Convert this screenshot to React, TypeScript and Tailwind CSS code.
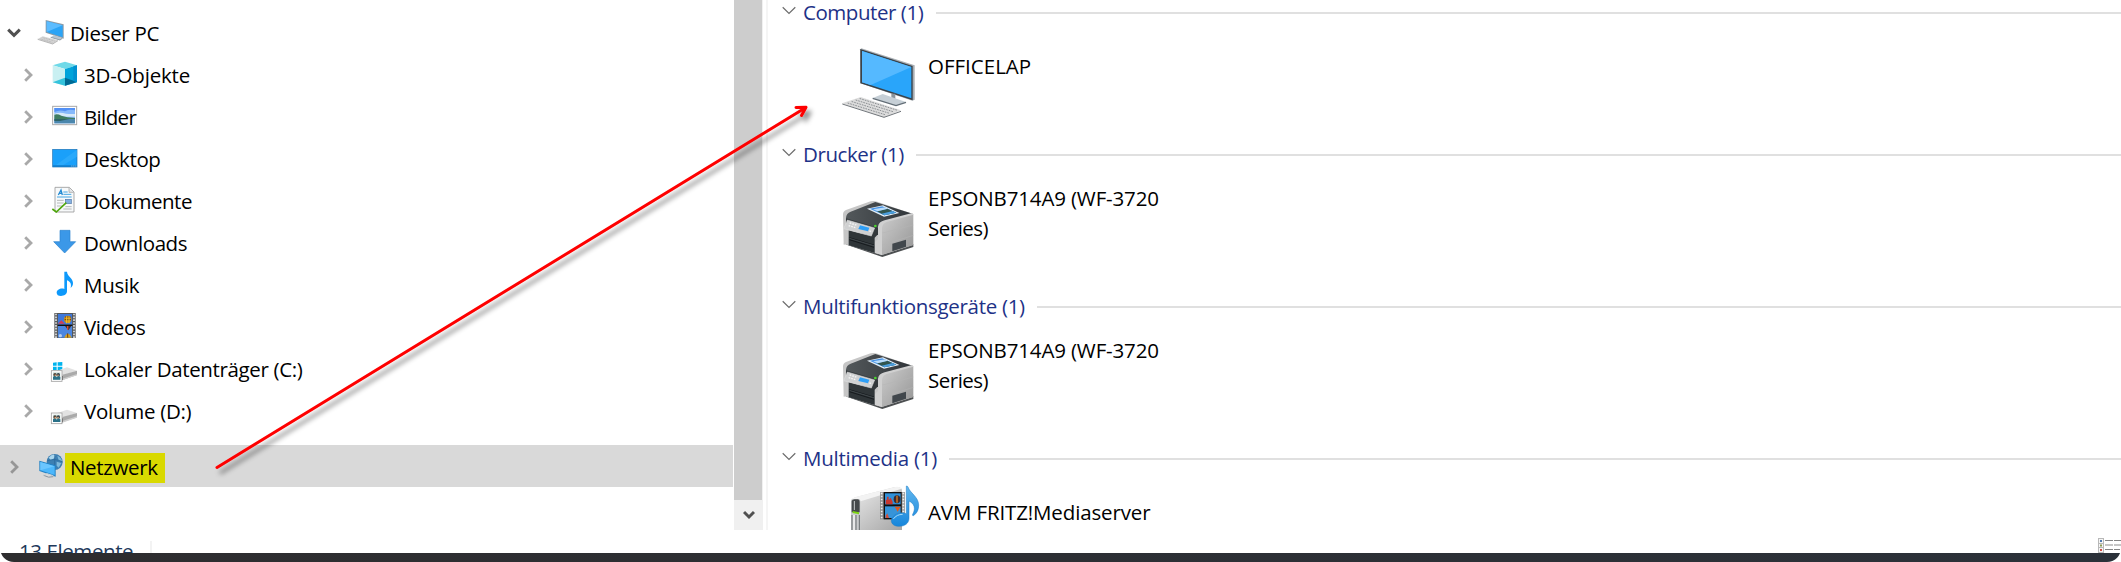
import type { ReactNode } from 'react'
import clsx from 'clsx'

interface IconProps {
  viewBox: string
  children: ReactNode
}

// small 26px tree icon
function TreeIcon({ viewBox, children }: IconProps) {
  return (
    <svg viewBox={viewBox} className="h-[26px] w-[26px] shrink-0 overflow-visible">
      {children}
    </svg>
  )
}

function PcIcon() {
  return (
    <TreeIcon viewBox="114 60 78 78">
      <path d="M137 60 L191 73 V116 L137 98 Z" fill="#8f9ba5" />
      <path d="M140 64 L188 76 V112 L140 96 Z" fill="#2ba4f6" />
      <path d="M140 64 L188 76 L140 96 Z" fill="#5cbcff" />
      <path d="M162 106 L188 114 L180 121 L152 112 Z" fill="#b9c6d1" />
      <path d="M152 112 L180 120 L187 115" fill="none" stroke="#70808c" strokeWidth="2" />
      <path d="M113 117 L128 109 L174 121 L158 132 Z" fill="#d4d4d4" />
      <path d="M113 118 L158 132 L174 122" fill="none" stroke="#999" strokeWidth="2" />
      <path d="M122 117 L157 127 M128 113 L164 123" stroke="#aaa" strokeWidth="2" strokeDasharray="3 2" />
    </TreeIcon>
  )
}

function CubeIcon() {
  return (
    <TreeIcon viewBox="156 186 78 78">
      <path d="M195 185 L231 196 L195 207 L158 196 Z" fill="#6fd9e8" />
      <path d="M158 196 L195 207 V257 L158 247 Z" fill="#c9f0f2" />
      <path d="M195 207 L231 196 V247 L195 257 Z" fill="#00a3da" />
      <path d="M158 247 L195 233 V257 Z" fill="#35c3dc" />
      <path d="M195 233 L231 246 L195 257 Z" fill="#006a94" />
      <path d="M220 199 L231 196 V247 L220 242 Z" fill="#0090d0" />
    </TreeIcon>
  )
}

function PicturesIcon() {
  return (
    <TreeIcon viewBox="156 312 78 78">
      <rect x="158" y="319" width="72" height="55" fill="#fff" stroke="#a8a8a8" strokeWidth="3" />
      <rect x="163" y="324" width="62" height="46" fill="#86b9fb" />
      <path d="M163 324 H225 V331 Q205 326 195 334 Q180 328 163 336 Z" fill="#5290f5" />
      <path d="M163 341 Q180 335 198 341 Q210 343 225 342 V350 H163 Z" fill="#d5e9fa" />
      <path d="M163 344 Q172 340 184 347 Q200 352 225 354 V358 H163 Z" fill="#3f7d62" />
      <rect x="163" y="357" width="62" height="13" fill="#4b87ad" />
      <path d="M163 357 H208 L180 363 H163 Z" fill="#2d6367" />
    </TreeIcon>
  )
}

function DesktopIcon() {
  return (
    <TreeIcon viewBox="156 18 78 78">
      <rect x="158" y="28" width="73" height="53" fill="#1aa0fa" stroke="#2072b4" strokeWidth="2" />
      <path d="M231 29 V50 L190 75 H168 Z" fill="#35affc" opacity=".6" />
      <path d="M159 78 H231" stroke="#0c6cb4" strokeWidth="3" />
      <path d="M214 78 H230" stroke="#cfeafe" strokeWidth="2" strokeDasharray="3 3" />
    </TreeIcon>
  )
}

function DocumentsIcon() {
  return (
    <TreeIcon viewBox="156 144 78 78">
      <path d="M165 142 H208 L222 156 V216 H165 Z" fill="#f7f9fa" stroke="#9a9a9a" strokeWidth="2.5" />
      <path d="M207 143 V157 H221" fill="#e4e7e9" stroke="#9a9a9a" strokeWidth="2" />
      <path d="M175 165 L183 150 L187 165 M178 160 H186" fill="none" stroke="#258bd3" strokeWidth="4" />
      <path d="M190 156 H203 M190 163 H214 M171 171 H215" stroke="#45a5e3" strokeWidth="3" />
      <path d="M171 181 H191 M171 189 H191 M171 198 H189 M190 207 H215 M196 200 H215" stroke="#b5b8ba" strokeWidth="3" />
      <rect x="196" y="178" width="18" height="13" fill="#83aee0" stroke="#527aac" strokeWidth="2" />
      <path d="M157 207 L169 216 L199 188" fill="none" stroke="#4ea60b" strokeWidth="5" />
    </TreeIcon>
  )
}

function DownloadsIcon() {
  return (
    <TreeIcon viewBox="156 270 78 78">
      <path d="M180 271 H210 V305 H227 L194 339 L161 305 H180 Z" fill="#3b98e8" stroke="#2c83cf" strokeWidth="2" />
    </TreeIcon>
  )
}

function MusicIcon() {
  return (
    <TreeIcon viewBox="156 -24 78 78">
      <path
        d="M193 -25 H201 C202 -10 220 -5 219 10 C219 17 216 21 212 24 C215 12 211 5 201 1 V34 C201 43 192 48 183 48 C175 48 170 44 170 38 C170 29 183 23 193 27 Z"
        fill="#0d99fb"
      />
    </TreeIcon>
  )
}

function VideosIcon() {
  return (
    <TreeIcon viewBox="156 102 78 78">
      <rect x="163" y="99" width="64" height="75" fill="#55585b" />
      <path d="M168 101 V174 M222 101 V174" stroke="#e0e0e0" strokeWidth="5" strokeDasharray="5 3.5" />
      <rect x="174" y="102" width="42" height="32" fill="#3e78da" />
      <rect x="174" y="138" width="42" height="35" fill="#4b86e0" />
      <path d="M173 136 H217" stroke="#111" strokeWidth="4" />
      <circle cx="203" cy="118" r="11" fill="#cf8d18" />
      <path d="M195 111 H212 M194 119 H213" stroke="#6a3d18" strokeWidth="3" />
      <path d="M200 109 V130 M207 109 V130" stroke="#f4c524" strokeWidth="3" />
      <path d="M174 131 L184 121 L194 131 Z" fill="#d43c50" />
      <path d="M195 138 H214 L205 151 Z" fill="#3d3033" />
      <path d="M203 138 V149" stroke="#df4c2b" strokeWidth="4" />
      <path d="M193 173 Q203 149 215 173 Z" fill="#d9a21b" />
      <path d="M203 160 V173" stroke="#6a3d18" strokeWidth="3" />
      <circle cx="181" cy="167" r="5" fill="#b9cfee" />
    </TreeIcon>
  )
}

function Drive({ dy = 0 }: { dy?: number }) {
  return (
    <g transform={`translate(0 ${dy})`}>
      <path d="M163 275 L201 262 L231 272 L187 286 Z" fill="#e2e2e2" />
      <path d="M187 284 L231 272 V285 L187 300 Z" fill="#aaaaaa" />
      <path d="M187 296 L231 282 V286 L187 301 Z" fill="#cfcfcf" />
      <path d="M187 288 V300" stroke="#444" strokeWidth="3" />
      <rect x="154" y="272" width="32" height="32" fill="#fff" stroke="#a2a2a2" strokeWidth="2.5" />
      <rect x="159" y="277" width="22" height="22" fill="#c9ddd8" />
      <path d="M159 299 V291 Q165 285 170 292 Q176 285 181 291 V299 Z" fill="#2a7188" />
      <circle cx="165" cy="284" r="5" fill="#4d4036" />
      <circle cx="175" cy="284" r="5" fill="#33404a" />
      <circle cx="166" cy="286" r="2.5" fill="#dba77c" />
      <circle cx="174" cy="286" r="2.5" fill="#dba77c" />
    </g>
  )
}

function SystemDriveIcon() {
  return (
    <TreeIcon viewBox="156 228 78 78">
      <path d="M159 248 L170 247 V257 H159 Z M173 247 L187 246 V257 H173 Z M159 260 H170 V270 H159 Z M173 260 H187 V271 H173 Z" fill="#00b4ee" />
      <Drive />
    </TreeIcon>
  )
}

function DriveIcon() {
  return (
    <TreeIcon viewBox="156 354 78 78">
      <Drive dy={127} />
    </TreeIcon>
  )
}

function NetworkIcon() {
  return (
    <TreeIcon viewBox="114 84 78 78">
      <circle cx="164" cy="111" r="24" fill="#3c7fb2" />
      <path d="M146 98 Q155 87 166 89 L163 100 L152 105 Z" fill="#a9d6ee" />
      <path d="M172 92 Q184 98 186 108 L176 106 Z M170 110 L184 114 L176 128 L170 122 Z" fill="#7db8db" />
      <path d="M164 87 V134 M141 108 Q164 98 188 111" stroke="#2b6797" strokeWidth="2" fill="none" />
      <path d="M118 107 L167 121 V155 L118 138 Z" fill="#2584c7" />
      <path d="M121 111 L164 124 V150 L121 136 Z" fill="#4cb7fb" />
      <path d="M121 111 L164 124 L121 136 Z" fill="#6bc6ff" />
      <path d="M131 151 Q146 160 160 155" fill="none" stroke="#8895a0" strokeWidth="3" />
      <path d="M132 150 L141 146 L160 152" fill="none" stroke="#ccd4da" strokeWidth="3" />
    </TreeIcon>
  )
}

const KEY_ROWS = [0, 1, 2, 3]

function ComputerIcon() {
  return (
    <svg viewBox="420 138 228 228" className="h-[76px] w-[76px] shrink-0">
      <path d="M484 145 L644 196 V299 L637 302 L481 250 V148 Z" fill="#a9afb4" />
      <path d="M481 147 L638 198 V301 L481 250 Z" fill="#3a4249" />
      <path d="M486 153 L634 201 V295 L486 247 Z" fill="#29a5fa" />
      <path d="M486 153 L634 201 L512 255 L486 247 Z" fill="#55b9ff" />
      <path d="M574 281 H586 V303 L574 299 Z" fill="#8b949c" />
      <path d="M518 294 L548 282 L618 306 L588 317 Z" fill="#c6cfd6" />
      <path d="M518 295 L588 317 L618 307" fill="none" stroke="#626d76" strokeWidth="4" />
      <path d="M426 310 L482 291 L603 331 L552 352 Z" fill="#dcdcdc" />
      <path d="M427 312 L552 352 L603 334" fill="none" stroke="#70757a" strokeWidth="3" />
      {KEY_ROWS.map((r) => (
        <path
          key={r}
          d="M443 309 L555 344"
          transform={`translate(${r * 12} ${r * -4.5})`}
          stroke="#8b8f93"
          strokeWidth="3"
          strokeDasharray="5 3"
        />
      ))}
    </svg>
  )
}

function PrinterIcon() {
  return (
    <svg viewBox="420 102 228 180" className="h-[60px] w-[76px] shrink-0">
      <defs>
        <linearGradient id="printer-side" x1="0" x2="1" y1="0" y2="1">
          <stop offset="0" stopColor="#cdcdcd" />
          <stop offset="1" stopColor="#959595" />
        </linearGradient>
        <linearGradient id="printer-top" x1="0" x2="1" y1="0" y2="0">
          <stop offset="0" stopColor="#53585b" />
          <stop offset="1" stopColor="#303539" />
        </linearGradient>
      </defs>
      {/* body */}
      <path d="M431 236 L547 276 L640 246 V238 H431 Z" fill="#4d5052" />
      <path d="M429 148 Q429 139 438 135 L512 109 Q522 106 532 110 L639 147 V240 L545 270 L431 236 Z" fill="#c6c6c6" />
      <path d="M438 158 Q439 144 452 140 L526 111 L638 146 L555 169 Q540 172 537 184 L532 190 L438 162 Z" fill="url(#printer-top)" />
      <path d="M545 270 V185 Q546 173 558 169 L640 147 V240 Z" fill="url(#printer-side)" />
      <path d="M524 232 L534 222 V185 Q536 170 554 166 L636 144 L640 149 L560 171 Q547 175 546 190 V270 L524 263 Z" fill="#d0d0d0" />
      <path d="M547 204 L640 180 M547 240 L640 211" stroke="#b4b4b4" strokeWidth="1.5" />
      {/* photo on the glass */}
      <path d="M501 131 L549 121 L598 144 L552 155 Z" fill="#e4eef6" />
      <path d="M509 131 L547 124 L589 143 L553 151 Z" fill="#4792e4" />
      <path d="M531 139 L562 131 L589 143 L553 151 Z" fill="#31564f" />
      <path d="M519 133 L556 127 L564 131 L533 139 Z" fill="#b9dcfa" />
      <path d="M545 146 L578 138 L589 143 L553 151 Z" fill="#4b9fe0" />
      {/* paper trays */}
      <path d="M446 196 L524 216 V264 L446 241 Z" fill="#2f3538" />
      <path d="M448 218 L522 240 M448 224 L522 247" stroke="#111518" strokeWidth="2.5" />
      <path d="M449 220 L522 242" stroke="#596064" strokeWidth="1.5" />
      {/* control panel */}
      <path d="M438 160 L534 188 V208 L524 218 L438 190 Z" fill="#34393c" />
      <path d="M442 165 L524 189 L514 213 L431 191 Z" fill="#cfd0d1" stroke="#e3e3e3" strokeWidth="1.5" />
      <path d="M480 181 L508 188 L504 199 L475 192 Z" fill="#2f9ff6" />
      <path d="M449 174 L469 180 M446 182 L466 188 M508 198 L516 200" stroke="#f4f4f4" strokeWidth="4" strokeDasharray="5 3" />
      <circle cx="526" cy="183" r="4" fill="#4ad52d" />
      {/* side vent */}
      <path d="M577 236 L618 224 V245 L577 259 Z" fill="#41474c" />
    </svg>
  )
}

function MediaServerIcon() {
  return (
    <svg viewBox="420 180 240 135" className="h-[45px] w-[80px] shrink-0">
      <defs>
        <linearGradient id="server-body" x1="0" x2="1" y1="0" y2="1">
          <stop offset="0" stopColor="#ededed" />
          <stop offset="1" stopColor="#a6a6a6" />
        </linearGradient>
        <linearGradient id="note-blue" x1="0" x2="0" y1="0" y2="1">
          <stop offset="0" stopColor="#63b7ee" />
          <stop offset="1" stopColor="#1686dc" />
        </linearGradient>
      </defs>
      <path d="M453 228 Q455 220 465 217 L585 186 Q606 184 606 197 V315 H453 Z" fill="url(#server-body)" />
      <path d="M455 224 Q457 220 465 217 L585 186 Q600 184 605 191 L482 229 Z" fill="#f3f3f3" />
      <rect x="453" y="222" width="28" height="93" rx="5" fill="#c9cbcc" />
      <path d="M455 262 V228 Q457 223 464 223 H474 Q479 224 479 230 V262 Z" fill="#45494b" />
      <path d="M463 228 V255" stroke="#c8cccd" strokeWidth="3" />
      <path d="M458 258 L477 262 V268 L458 264 Z" fill="#7bd50e" />
      <path d="M456 270 V315 M468 270 V315 M478 270 V315" stroke="#54595c" strokeWidth="2.5" />
      <path d="M462 270 V315" stroke="#f8f8f8" strokeWidth="4" />
      {/* film strip */}
      <rect x="540" y="201" width="75" height="82" fill="#777" opacity=".7" />
      <path d="M545 203 V282 M610 203 V282" stroke="#eee" strokeWidth="5" strokeDasharray="5 4" />
      <rect x="551" y="201" width="54" height="82" fill="#111" />
      <rect x="555" y="205" width="47" height="33" fill="#3090d8" />
      <rect x="555" y="244" width="47" height="35" fill="#3794d8" />
      <path d="M557 238 V224 H561 V215 H566 V226 L572 218 L578 230 V238 Z" fill="#c9382f" />
      <ellipse cx="591" cy="223" rx="10" ry="12" fill="#3d2b2f" />
      <path d="M591 212 V233" stroke="#e07a20" strokeWidth="4" />
      <path d="M584 245 H602 L593 260 Z" fill="#dc5a22" />
      <path d="M557 279 V272 L562 265 L567 279 Z" fill="#d3503c" />
      {/* note */}
      <path
        d="M619 183 Q622 182 624 186 C629 203 656 216 656 240 C656 256 650 266 640 272 Q636 272 638 268 C648 250 643 236 627 228 V280 C627 295 614 304 598 304 C583 304 573 297 574 285 C576 270 600 258 619 266 Z"
        fill="url(#note-blue)"
        stroke="#1a7bc4"
        strokeWidth="1.5"
      />
      <path d="M580 282 Q590 268 608 268" fill="none" stroke="#a5d9f8" strokeWidth="3" />
    </svg>
  )
}

interface TreeItem {
  label: string
  icon: ReactNode
  tracking: string
}

const TREE_ITEMS: TreeItem[] = [
  { label: '3D-Objekte', icon: <CubeIcon />, tracking: 'tracking-[-0.2px]' },
  { label: 'Bilder', icon: <PicturesIcon />, tracking: 'tracking-[-0.65px]' },
  { label: 'Desktop', icon: <DesktopIcon />, tracking: 'tracking-[-0.37px]' },
  { label: 'Dokumente', icon: <DocumentsIcon />, tracking: 'tracking-[-0.5px]' },
  { label: 'Downloads', icon: <DownloadsIcon />, tracking: 'tracking-[-0.42px]' },
  { label: 'Musik', icon: <MusicIcon />, tracking: 'tracking-[-0.3px]' },
  { label: 'Videos', icon: <VideosIcon />, tracking: 'tracking-[-0.36px]' },
  { label: 'Lokaler Datenträger (C:)', icon: <SystemDriveIcon />, tracking: 'tracking-[-0.36px]' },
  { label: 'Volume (D:)', icon: <DriveIcon />, tracking: 'tracking-[-0.28px]' },
]

function ChevronRight({ className }: { className?: string }) {
  return (
    <svg viewBox="0 0 9 14" className={clsx('h-[14px] w-[9px] shrink-0', className)}>
      <path d="M1.2 1.2 L7 7 L1.2 12.8" fill="none" stroke="currentColor" strokeWidth="2.8" />
    </svg>
  )
}

function ChevronDown({ className }: { className?: string }) {
  return (
    <svg viewBox="0 0 14 10" className={clsx('h-[10px] w-[14px] shrink-0', className)}>
      <path d="M1.2 1.6 L7 7.4 L12.8 1.6" fill="none" stroke="currentColor" strokeWidth="3" />
    </svg>
  )
}

function Sidebar() {
  return (
    <div className="w-[733px] shrink-0 pt-3">
      <div className="flex h-[42px] items-center pl-[7px]">
        <ChevronDown className="text-[#505050]" />
        <div className="ml-[17px] flex">
          <PcIcon />
        </div>
        <span className="ml-1.5 tracking-[-0.3px]">Dieser PC</span>
      </div>
      {TREE_ITEMS.map((item) => (
        <div key={item.label} className="flex h-[42px] items-center pl-[24px]">
          <ChevronRight className="mr-[19px] text-[#a9a9a9]" />
          {item.icon}
          <span className={clsx('ml-1.5', item.tracking)}>{item.label}</span>
        </div>
      ))}
      <div className="mt-[13px] flex h-[42px] items-center bg-[#d9d9d9] pl-[10px]">
        <ChevronRight className="mr-[19px] mt-0.5 text-[#969696]" />
        <NetworkIcon />
        <span className="ml-px mt-1 flex h-[30px] w-[100px] items-center bg-[#d9d900] pb-px pl-[5px] tracking-[-0.35px]">
          Netzwerk
        </span>
      </div>
    </div>
  )
}

function Scrollbar() {
  return (
    <div className="ml-px flex w-[29px] shrink-0 flex-col bg-[#f0f0f0]">
      <div className="h-[500px] w-7 bg-[#cdcdcd]" />
      <div className="flex flex-1 items-center justify-center">
        <svg viewBox="0 0 12 10" className="h-[10px] w-[12px]">
          <path d="M1 2 L6 7 L11 2" fill="none" stroke="#505050" strokeWidth="3" />
        </svg>
      </div>
    </div>
  )
}

interface GroupProps {
  title: string
  tracking: string
  width: string
  height: string
  children: ReactNode
}

function Group({ title, tracking, width, height, children }: GroupProps) {
  return (
    <section className={clsx('shrink-0', height)}>
      <div className="flex h-[26px] items-center pl-[14px]">
        <svg viewBox="0 0 14 9" className="-mt-[5px] h-[9px] w-[14px] shrink-0">
          <path d="M0.7 1.2 L7 7.4 L13.3 1.2" fill="none" stroke="#6d6d6d" strokeWidth="1.2" />
        </svg>
        <h2 className={clsx('-mt-0.5 ml-[7px] shrink-0 whitespace-nowrap text-[#1e3287]', tracking, width)}>{title}</h2>
        <div className="h-[2px] flex-1 bg-[#e0e0e0]" />
      </div>
      <div className="flex items-start pl-[72px]">{children}</div>
    </section>
  )
}

function PrinterItem() {
  return (
    <>
      <div className="mt-[31px] flex">
        <PrinterIcon />
      </div>
      <div className="ml-3 mt-[15px] leading-[30px]">
        <p className="tracking-[-0.15px]">EPSONB714A9 (WF-3720</p>
        <p className="tracking-[-0.5px]">Series)</p>
      </div>
    </>
  )
}

function Content() {
  return (
    <main className="ml-[3px] flex flex-1 flex-col overflow-hidden border-l-2 border-[#f5f5f5]">
      <Group title="Computer (1)" tracking="tracking-[-0.45px]" width="w-[133px]" height="h-[142px]">
        <div className="mt-5 flex">
          <ComputerIcon />
        </div>
        <p className="ml-3 mt-[25px] leading-[30px]">OFFICELAP</p>
      </Group>
      <Group title="Drucker (1)" tracking="tracking-[-0.42px]" width="w-[113px]" height="h-[152px]">
        <PrinterItem />
      </Group>
      <Group title="Multifunktionsgeräte (1)" tracking="tracking-[-0.3px]" width="w-[234px]" height="h-[152px]">
        <PrinterItem />
      </Group>
      <Group title="Multimedia (1)" tracking="tracking-[-0.24px]" width="w-[146px]" height="h-[84px]">
        <div className="mt-[13px] flex">
          <MediaServerIcon />
        </div>
        <p className="ml-2 mt-[25px] leading-[30px] tracking-[-0.13px]">AVM FRITZ!Mediaserver</p>
      </Group>
    </main>
  )
}

function StatusBar() {
  return (
    <footer className="flex h-[23px] items-start justify-between overflow-hidden">
      <div className="flex">
        <span className="ml-[19px] mt-1.5 w-[131px] leading-[30px] tracking-[-0.42px] text-[#1e395b]">13 Elemente</span>
        <div className="mt-[11px] h-3 w-[2px] bg-[#f3f3f3]" />
      </div>
      <svg viewBox="0 0 23 15" className="mt-2 h-[15px] w-[23px]">
        <rect width="6" height="15" fill="#b8b8b8" />
        <path d="M1 1 H5 V5 H1 Z M1 6 H5 V9 H1 Z M1 10 H5 V14 H1 Z" fill="#f5f5f5" />
        <path d="M2 3 H4" stroke="#507bb0" strokeWidth="2" />
        <path d="M2 7.5 H4" stroke="#8b9a50" strokeWidth="2" />
        <path d="M2 12 H4" stroke="#d04d45" strokeWidth="2" />
        <path d="M7 2.5 H15 M16 2.5 H23 M7 11.5 H15 M16 11.5 H22" stroke="#858585" />
        <path d="M7 7 H15 M16 7 H23" stroke="#c6c6c6" strokeWidth="2" />
      </svg>
    </footer>
  )
}

// red arrow drawn over both panes
function ArrowAnnotation() {
  return (
    <svg viewBox="0 0 2121 562" className="pointer-events-none absolute inset-0 h-[562px] w-[2121px]">
      <defs>
        <filter id="arrow-shadow" x="-5%" y="-5%" width="110%" height="115%">
          <feDropShadow dx="4" dy="5" stdDeviation="2.5" floodColor="#000" floodOpacity=".45" />
        </filter>
      </defs>
      <g filter="url(#arrow-shadow)" fill="none" stroke="#fe0000" strokeWidth="3" strokeLinecap="round" strokeLinejoin="round">
        <path d="M217 467.5 L805 108" />
        <path d="M796 107.5 L806 107.3 L801.5 115.5" />
      </g>
    </svg>
  )
}

export default function App() {
  return (
    <div className="h-[562px] w-[2121px] overflow-hidden bg-white">
      <div className="relative flex h-[562px] flex-col overflow-hidden rounded-b-[14px] bg-white font-['Open_Sans','Noto_Sans',sans-serif] text-[20.5px] text-black">
        <div className="flex h-[530px] shrink-0">
          <Sidebar />
          <Scrollbar />
          <Content />
        </div>
        <StatusBar />
        <div className="h-[9px] bg-linear-to-r from-[#2e2d2f] to-[#2b3139]" />
        <ArrowAnnotation />
      </div>
    </div>
  )
}
